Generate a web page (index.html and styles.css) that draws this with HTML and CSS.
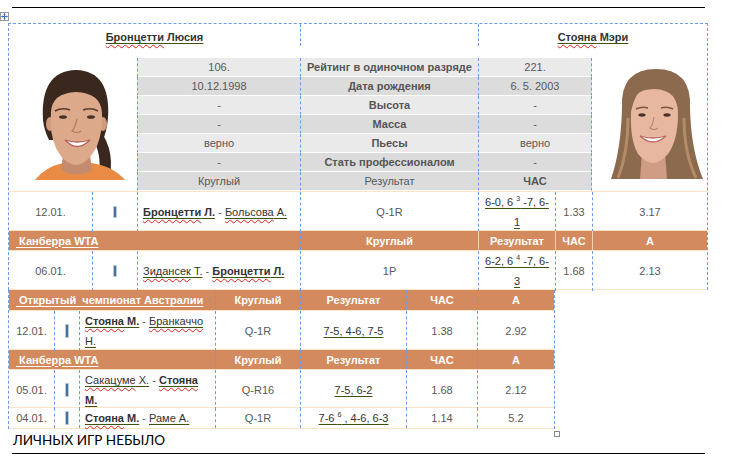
FILE: index.html
```html
<!DOCTYPE html>
<html lang="ru">
<head>
<meta charset="utf-8">
<title>H2H</title>
<link rel="stylesheet" href="styles.css">
</head>
<body>
<div class="page">
  <svg class="move" width="9" height="9" viewBox="0 0 9 9">
    <rect x="0.5" y="0.5" width="8" height="8" fill="#fff" stroke="#9a9a9a"/>
    <path d="M4.5 1.5v6M1.5 4.5h6" stroke="#3d6fc4" stroke-width="1"/>
    <path d="M4.5 1.2l-1.3 1.4h2.6zM4.5 7.8l-1.3-1.4h2.6zM1.2 4.5l1.4-1.3v2.6zM7.8 4.5l-1.4-1.3v2.6z" fill="#3d6fc4"/>
  </svg>
  <div class="rule"></div>

  <div class="t1">
    <div class="names">
      <div class="nm"><a class="lk b"><span class="sp">Бронцетти</span> Люсия</a></div>
      <div class="nm mid"></div>
      <div class="nm dl"><a class="lk b"><span class="sp">Стояна</span> Мэри</a></div>
    </div>
    <div class="prof">
      <div class="photo">
        <svg width="128" height="133" viewBox="0 0 128 133">
          <path d="M86 66 Q106 88 101 117 L90 117 Q93 94 82 78 Z" fill="#3a281e"/>
          <path d="M26 122 Q36 109 54 105 L82 105 Q104 108 116 122 Z" fill="#e98a45"/>
          <path d="M55 90 L80 90 L83 112 Q68 121 52 112 Z" fill="#c48b6e"/>
          <path d="M34 62 Q31 13 67 12 Q102 13 99 60 Q98 72 94 82 L40 82 Q35 72 34 62 Z" fill="#3a281e"/>
          <ellipse cx="41" cy="66" rx="4" ry="7" fill="#cf9a7c"/>
          <ellipse cx="94" cy="66" rx="4" ry="7" fill="#cf9a7c"/>
          <path d="M42 54 Q43 35 67 34 Q92 35 93 55 Q94 73 88 88 Q79 106 67 107 Q55 106 47 90 Q40 74 42 54 Z" fill="#dca98b"/>
          <path d="M46 53 Q53 49 61 52" stroke="#5a3a2c" stroke-width="1.6" fill="none"/>
          <path d="M74 52 Q82 49 89 53" stroke="#5a3a2c" stroke-width="1.6" fill="none"/>
          <ellipse cx="54" cy="59" rx="4" ry="1.8" fill="#4a3026"/>
          <ellipse cx="82" cy="59" rx="4" ry="1.8" fill="#4a3026"/>
          <path d="M68 61 Q66 70 63 73 Q68 76 72 73" stroke="#b67c62" stroke-width="1.2" fill="none"/>
          <path d="M56 82 Q68 95 81 82 Q68 86 56 82 Z" fill="#fff" stroke="#b8625c" stroke-width="1.3"/>
        </svg>
      </div>
      <div class="stats">
        <div class="srow l"><div>106.</div><div class="lbl">Рейтинг в одиночном разряде</div><div>221.</div></div>
        <div class="srow d"><div>10.12.1998</div><div class="lbl">Дата рождения</div><div>6. 5. 2003</div></div>
        <div class="srow l"><div>-</div><div class="lbl">Высота</div><div>-</div></div>
        <div class="srow d"><div>-</div><div class="lbl">Масса</div><div>-</div></div>
        <div class="srow l"><div>верно</div><div class="lbl">Пьесы</div><div>верно</div></div>
        <div class="srow d"><div>-</div><div class="lbl">Стать профессионалом</div><div>-</div></div>
        <div class="srow d"><div>Круглый</div><div>Результат</div><div class="lbl">ЧАС</div></div>
      </div>
      <div class="photo">
        <svg width="115" height="133" viewBox="0 0 115 133">
          <path d="M30 50 Q28 11 64 11 Q100 11 98 50 Q99 92 111 121 L19 121 Q29 92 30 50 Z" fill="#8c6a4e"/>
          <path d="M36 60 Q36 95 26 120 M92 60 Q92 95 104 120" stroke="#b48d68" stroke-width="3" fill="none"/>
          <path d="M50 94 L73 94 L75 121 L48 121 Z" fill="#cf9c84"/>
          <path d="M39 56 Q38 31 62 31 Q87 32 86 56 Q86 82 76 96 Q68 105 61 105 Q54 105 46 96 Q38 82 39 56 Z" fill="#e8b7a0"/>
          <path d="M62 24 Q44 26 38 58 Q36 40 44 28 Q54 18 64 18 Z" fill="#8c6a4e"/>
          <path d="M62 24 Q82 26 88 58 Q90 40 82 28 Q72 18 62 18 Z" fill="#8c6a4e"/>
          <path d="M44 51 Q50 48 56 50" stroke="#7a5640" stroke-width="1.5" fill="none"/>
          <path d="M69 50 Q75 48 81 51" stroke="#7a5640" stroke-width="1.5" fill="none"/>
          <ellipse cx="50" cy="57" rx="3.6" ry="1.7" fill="#4a3026"/>
          <ellipse cx="75" cy="57" rx="3.6" ry="1.7" fill="#4a3026"/>
          <path d="M62 59 Q61 67 58 70 Q62 73 66 70" stroke="#c08670" stroke-width="1.2" fill="none"/>
          <path d="M48 78 Q61 90 74 78 Q61 82 48 78 Z" fill="#fff" stroke="#bf6a66" stroke-width="1.3"/>
        </svg>
      </div>
    </div>

    <div class="row mrow bt bb">
      <div class="c">12.01.</div>
      <div class="c dl"><span class="bar"></span></div>
      <div class="m dl"><span><a class="lk b"><span class="sp">Бронцетти</span> Л.</a> - <a class="lk"><span class="sp">Больсова</span> А.</a></span></div>
      <div class="c dl">Q-1R</div>
      <div class="c dl res"><a class="lk">6-0, 6 <sup>3</sup> -7, 6-<wbr>1</a></div>
      <div class="c dl">1.33</div>
      <div class="c dl">3.17</div>
    </div>
    <div class="row hrow">
      <div class="h hl s3"><a class="wl">&nbsp;Канберра WTA</a></div>
      <div class="h dl">Круглый</div>
      <div class="h cl">Результат</div>
      <div class="h cl">ЧАС</div>
      <div class="h cl">А</div>
    </div>
    <div class="row mrow bt bb">
      <div class="c">06.01.</div>
      <div class="c dl"><span class="bar"></span></div>
      <div class="m dl"><span><a class="lk"><span class="sp">Зидансек</span> Т.</a> - <a class="lk b"><span class="sp">Бронцетти</span> Л.</a></span></div>
      <div class="c dl">1P</div>
      <div class="c dl res"><a class="lk">6-2, 6 <sup>4</sup> -7, 6-<wbr>3</a></div>
      <div class="c dl">1.68</div>
      <div class="c dl">2.13</div>
    </div>
  </div>

  <div class="t2">
    <div class="row hrow h20">
      <div class="h hl s3"><a class="wl">&nbsp;Открытый&nbsp; чемпионат Австралии</a></div>
      <div class="h dl">Круглый</div>
      <div class="h dl">Результат</div>
      <div class="h dl">ЧАС</div>
      <div class="h dl">А</div>
    </div>
    <div class="row mrow bt bb">
      <div class="c">12.01.</div>
      <div class="c dl"><span class="bar tall"></span></div>
      <div class="m dl"><span><a class="lk b"><span class="sp">Стояна</span> М.</a> - <a class="lk"><span class="sp">Бранкаччо</span> Н.</a></span></div>
      <div class="c dl">Q-1R</div>
      <div class="c dl"><a class="lk">7-5, 4-6, 7-5</a></div>
      <div class="c dl">1.38</div>
      <div class="c dl">2.92</div>
    </div>
    <div class="row hrow">
      <div class="h hl s3"><a class="wl">&nbsp;Канберра WTA</a></div>
      <div class="h dl">Круглый</div>
      <div class="h dl">Результат</div>
      <div class="h dl">ЧАС</div>
      <div class="h dl">А</div>
    </div>
    <div class="row mrow m39 bt bb">
      <div class="c">05.01.</div>
      <div class="c dl"><span class="bar tall"></span></div>
      <div class="m dl"><span><a class="lk"><span class="sp">Сакацуме</span> Х.</a> - <a class="lk b"><span class="sp">Стояна</span> М.</a></span></div>
      <div class="c dl">Q-R16</div>
      <div class="c dl"><a class="lk">7-5, 6-2</a></div>
      <div class="c dl">1.68</div>
      <div class="c dl">2.12</div>
    </div>
    <div class="row mrow last bb">
      <div class="c">04.01.</div>
      <div class="c dl"><span class="bar tall"></span></div>
      <div class="m dl"><span><a class="lk b"><span class="sp">Стояна</span> М.</a> - <a class="lk">Раме А.</a></span></div>
      <div class="c dl">Q-1R</div>
      <div class="c dl"><a class="lk">7-6 <sup>6</sup> , 4-6, 6-3</a></div>
      <div class="c dl">1.14</div>
      <div class="c dl">5.2</div>
    </div>
    <span class="handle"></span>
  </div>

  <p class="note">ЛИЧНЫХ ИГР НЕБЫЛО</p>
  <div class="rule bottom"></div>
</div>
</body>
</html>
```

FILE: styles.css
```css
* { box-sizing: border-box; }
body {
  margin: 0;
  background: #fff;
  font-family: "Liberation Sans", Arial, sans-serif;
  font-size: 11px;
  color: #585858;
}
.page {
  position: relative;
  width: 749px;
  height: 465px;
  overflow: hidden;
  padding-top: 7px;
}
.move { position: absolute; left: 0; top: 12px; }
.rule { margin-left: 12px; width: 693px; height: 1px; background: #000; }
.rule.bottom { margin-top: 4px; }

.t1 {
  margin: 15px 0 0 8px;
  width: 700px;
  border: 1px dashed #6b9be6;
  border-bottom: none;
}
.t2 {
  position: relative;
  margin-left: 8px;
  width: 547px;
  border-left: 1px dashed #6b9be6;
  border-right: 1px dashed #6b9be6;
}
.dl { border-left: 1px dashed #6b9be6; }
.cl { border-left: 1px solid #f3d2b5; }

.names { display: grid; grid-template-columns: 291px 178px 229px; height: 22px; margin-bottom: 12px; }
.nm { display: flex; align-items: flex-end; justify-content: center; padding-bottom: 3px; }
.mid { border-left: 1px dashed #6b9be6; }

.prof { display: grid; grid-template-columns: 128px 455px 115px; height: 133px; }
.photo { display: flex; }
.stats { display: flex; flex-direction: column; }
.srow { display: grid; grid-template-columns: 163px 178px 114px; height: 19px; }
.srow > div {
  border-left: 1px dashed #6b9be6;
  border-bottom: 1px solid #fff;
  text-align: center;
  line-height: 18px;
  white-space: nowrap;
}
.srow > div:last-child { border-right: 1px dashed #6b9be6; }
.srow.l > div { background: #eaeaea; }
.srow.d > div { background: #dcdcdc; }
.lbl { font-weight: bold; color: #555; }

.row { display: grid; }
.t1 .row { grid-template-columns: 83px 45px 163px 178px 77px 37px 115px; }
.t2 .row { grid-template-columns: 45px 25px 136px 85px 106px 71px 77px; }

.mrow { height: 40px; line-height: 20px; }
.mrow.m39 { height: 39px; }
.mrow.last { height: 21px; }
.bt { border-top: 1px solid #fbe3c6; }
.bb { border-bottom: 1px solid #fbe3c6; }
.c { display: flex; align-items: center; justify-content: center; text-align: center; }
.res { padding: 0 5px; }
.m { display: flex; align-items: center; padding-left: 5px; padding-right: 4px; }

.hrow { height: 19px; background: #d48a5f; }
.hrow.h20 { height: 20px; }
.h {
  display: flex; align-items: center; justify-content: center;
  color: #fff; font-weight: bold; font-size: 11px;
}
.hl { justify-content: flex-start; padding-left: 7px; }
.s3 { grid-column: span 3; }
.wl { color: #fff; text-decoration: underline; text-underline-offset: 2px; }

.lk {
  color: #333;
  text-decoration: underline;
  text-decoration-color: #3d520f;
  text-underline-offset: 2px;
}
.b { font-weight: bold; }
.sp {
  text-decoration: underline wavy #e0231f;
  text-decoration-thickness: 1px;
  text-underline-offset: 3px;
}
sup { font-size: 7px; line-height: 0; vertical-align: 5px; }

.bar {
  display: inline-block;
  width: 4px; height: 12px;
  background: #4a7093;
  border: 1px solid #b9cbe0;
}
.bar.tall { height: 14px; }

.handle {
  position: absolute;
  left: 545px; top: 141px;
  width: 6px; height: 6px;
  border: 1px solid #8a8a8a;
  background: #fff;
}

.note {
  margin: 0 0 0 13px;
  padding-top: 2px;
  height: 20px;
  line-height: 18px;
  font-family: Lato, "Liberation Sans", sans-serif;
  font-size: 13.5px;
  color: #000;
}
```
